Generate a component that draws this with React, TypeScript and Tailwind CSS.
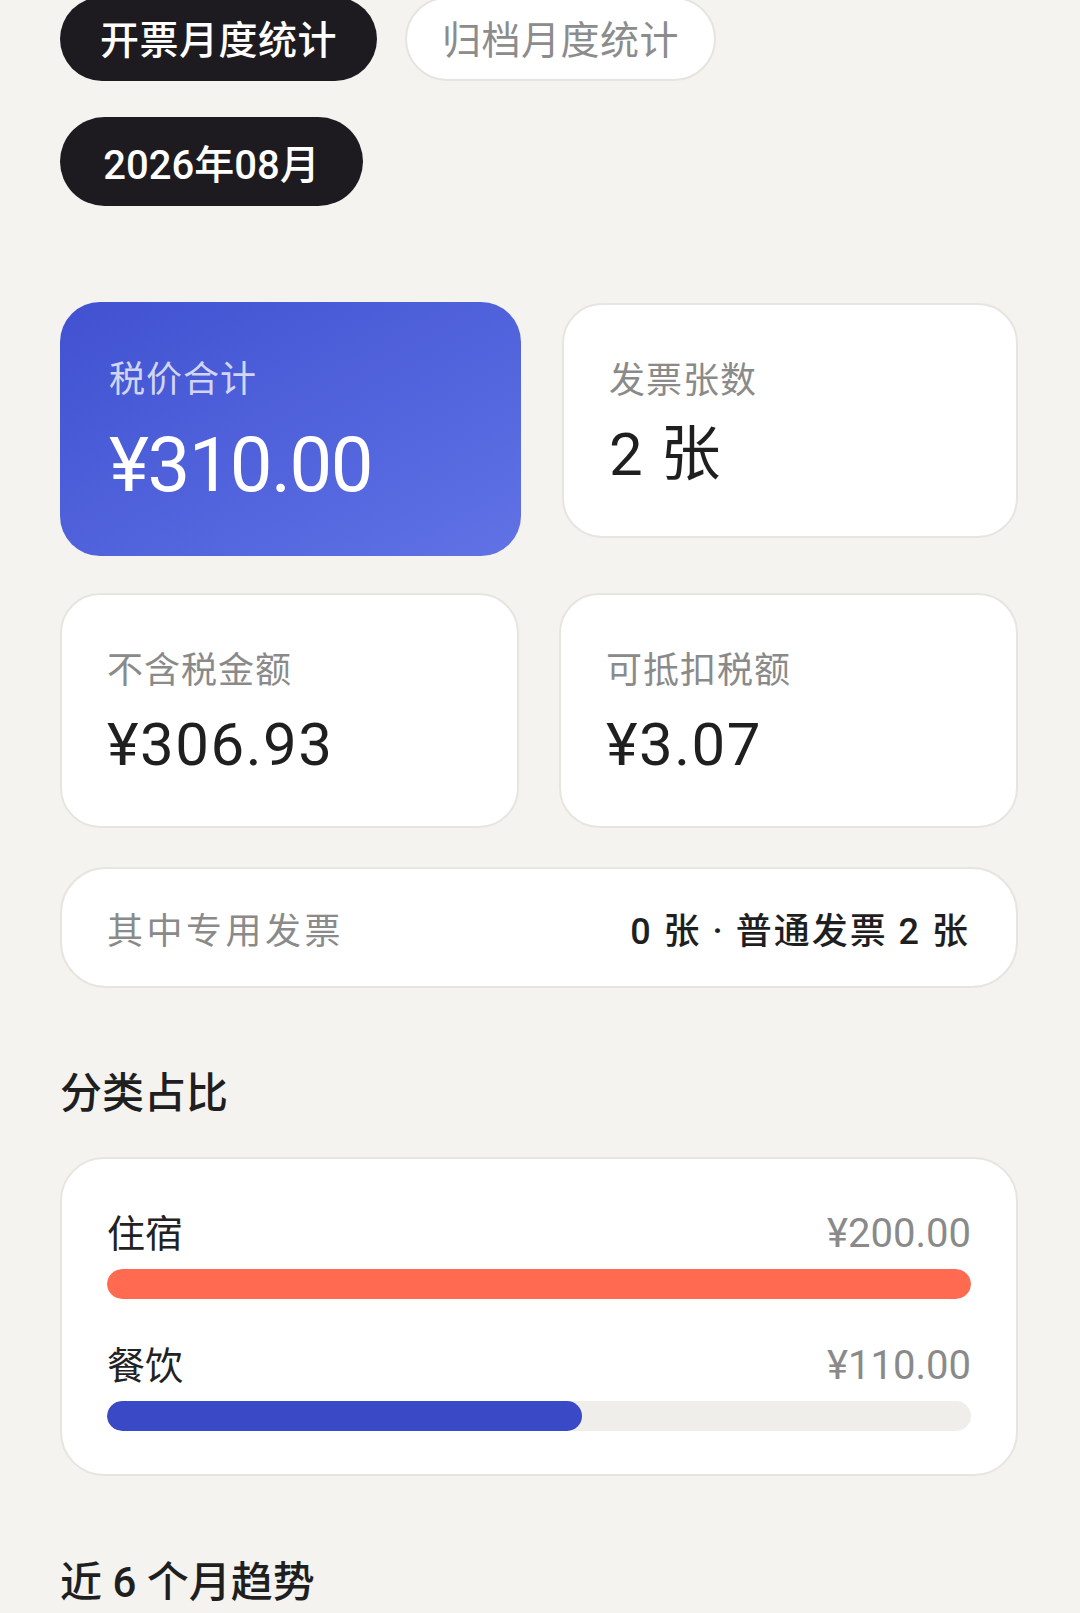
import React from "react";

const FONT = "font-['Roboto','Noto_Sans_CJK_SC',sans-serif]";

function StatCard({ label, value }: { label: string; value: string }) {
  return (
    <div className="h-[235px] rounded-[40px] border-2 border-[#e7e5e0] bg-white pl-[45px] pt-[56px]">
      <div className="text-[36px] leading-[40px] tracking-[1px] text-[#8a8a8a]">{label}</div>
      <div className="mt-[24px] text-[60px] leading-[60px] tracking-[1.5px] text-[#1f1f1f]">{value}</div>
    </div>
  );
}

function CategoryRow({
  name,
  amount,
  pct,
  color,
  first,
}: {
  name: string;
  amount: string;
  pct: number;
  color: string;
  first?: boolean;
}) {
  return (
    <div className={first ? "" : "mt-[45px]"}>
      <div className="flex items-baseline justify-between">
        <span className="text-[38px] leading-[44px] text-[#222222]">{name}</span>
        <span className="text-[40px] leading-[44px] text-[#8a8a8a]">{amount}</span>
      </div>
      <div className="mt-[13px] h-[30px] w-full overflow-hidden rounded-full bg-[#efeeeb]">
        <div className={`h-full rounded-full ${color}`} style={{ width: `${pct}%` }} />
      </div>
    </div>
  );
}

export default function App() {
  return (
    <div className={`${FONT} min-h-[1613px] overflow-hidden bg-[#f4f3ef] pl-[60px] pr-[62px]`}>
      {/* Tabs */}
      <div className="-mt-[3px] flex gap-[28px]">
        <div className="flex h-[84px] w-[317px] items-center justify-center rounded-full bg-[#1e1b20] pt-[4px] text-[39px] font-medium leading-[44px] tracking-[0.5px] text-white">
          开票月度统计
        </div>
        <div className="flex h-[84px] w-[311px] items-center justify-center rounded-full border-2 border-[#e6e4df] bg-white pt-[4px] text-[39px] leading-[44px] tracking-[0.5px] text-[#8c8c8c]">
          归档月度统计
        </div>
      </div>

      {/* Month */}
      <div className="mt-[36px] flex">
        <div className="flex h-[89px] w-[303px] items-center justify-center rounded-full bg-[#1e1b20] pt-[8px] text-[40px] font-medium leading-[44px] text-white">
          2026年08月
        </div>
      </div>

      {/* Row 1 */}
      <div className="mt-[96px] grid grid-cols-2 items-start gap-[40px]">
        <div className="h-[254px] w-[461px] rounded-[40px] bg-linear-to-br from-[#4151d1] to-[#6072e5] pl-[49px] pt-[58px]">
          <div className="text-[36px] leading-[40px] tracking-[1px] text-white/75">税价合计</div>
          <div className="mt-[27px] text-[76px] leading-[76px] tracking-[-1.5px] text-white">¥310.00</div>
        </div>
        <div className="mt-[1px] ml-[3px]">
          <StatCard label="发票张数" value="2 张" />
        </div>
      </div>

      {/* Row 2 */}
      <div className="mt-[37px] grid grid-cols-2 gap-[40px]">
        <StatCard label="不含税金额" value="¥306.93" />
        <StatCard label="可抵扣税额" value="¥3.07" />
      </div>

      {/* Wide card */}
      <div className="mt-[39px] flex h-[121px] items-center justify-between rounded-[46px] border-2 border-[#e7e5e0] bg-white pl-[45px] pr-[46px] pt-[8px]">
        <span className="text-[36px] leading-[40px] tracking-[3.5px] text-[#8a8a8a]">其中专用发票</span>
        <span className="text-[36px] font-medium leading-[40px] tracking-[2px] text-[#1f1f1f]">
          0 张 · 普通发票 2 张
        </span>
      </div>

      {/* Category */}
      <div className="mt-[81px] text-[42px] font-medium leading-[50px] text-[#1f1f1f]">分类占比</div>
      <div className="mt-[38px] rounded-[44px] border-2 border-[#e7e5e0] bg-white px-[45px] pb-[43px] pt-[53px]">
        <CategoryRow name="住宿" amount="¥200.00" pct={100} color="bg-[#ff6a50]" first />
        <CategoryRow name="餐饮" amount="¥110.00" pct={55} color="bg-[#3a4ac6]" />
      </div>

      {/* Trend */}
      <div className="mt-[82px] text-[42px] font-medium leading-[50px] text-[#1f1f1f]">近 6 个月趋势</div>
    </div>
  );
}
